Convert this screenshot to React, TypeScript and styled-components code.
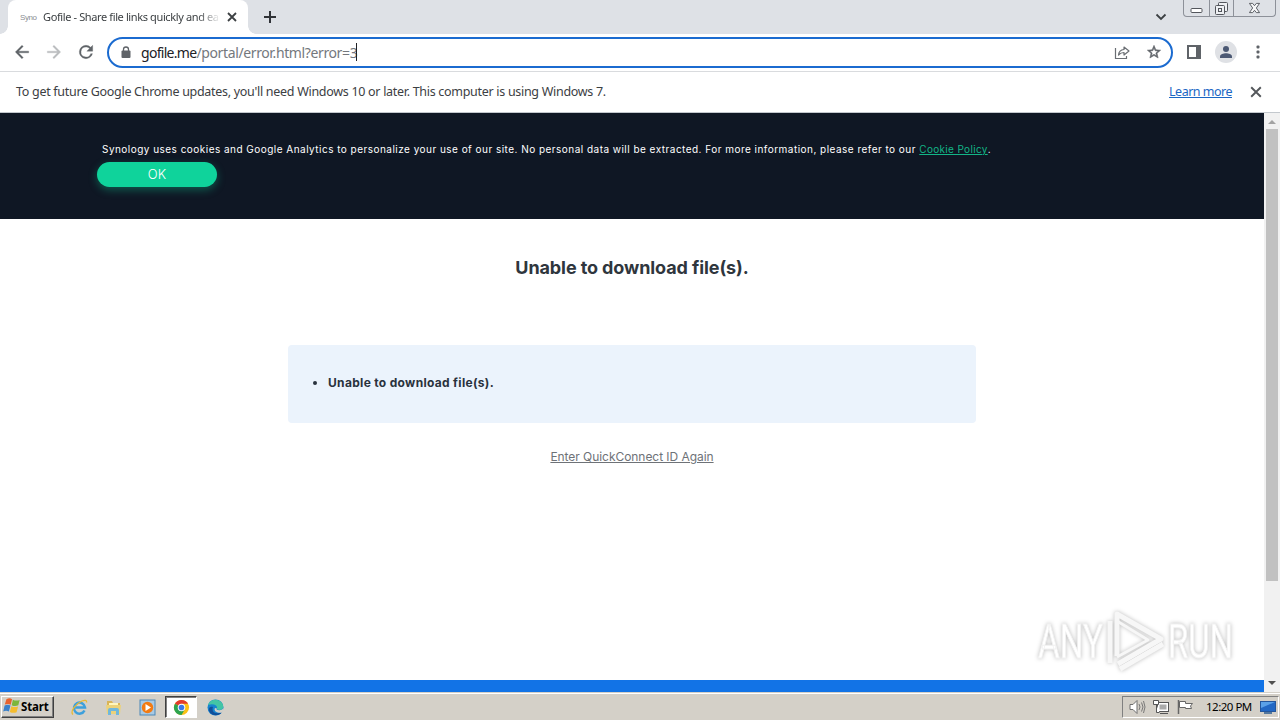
import React, { FC } from "react";
import styled, { createGlobalStyle } from "styled-components";

const GlobalStyle = createGlobalStyle`
  * {
    box-sizing: border-box;
  }
  body {
    margin: 0;
    overflow: hidden;
    background: #fff;
  }
`;

const tahoma = `"Noto Sans", "Open Sans", sans-serif`;

const Screen = styled.div`
  display: flex;
  flex-direction: column;
  width: 1280px;
  height: 720px;
  overflow: hidden;
  font-family: ${tahoma};
  svg {
    display: block;
    flex: none;
  }
`;

const Text = styled.span<{ $size: number; $spacing?: number; $color?: string }>`
  font-size: ${(p) => p.$size}px;
  letter-spacing: ${(p) => p.$spacing || 0}px;
  color: ${(p) => p.$color || "#3c4043"};
  white-space: nowrap;
`;

/* tab strip */
const TabStrip = styled.div`
  display: flex;
  height: 34px;
  flex: none;
  background: #dee1e6;
  padding-left: 8px;
`;

const Tab = styled.div`
  display: flex;
  align-items: center;
  position: relative;
  width: 240px;
  height: 34px;
  padding-left: 12px;
  background: #fff;
  border-radius: 8px 8px 0 0;
  &::before,
  &::after {
    content: "";
    position: absolute;
    bottom: 0;
    width: 8px;
    height: 8px;
  }
  &::before {
    left: -8px;
    background: radial-gradient(circle at 0 0, transparent 7.5px, #fff 8px);
  }
  &::after {
    right: -8px;
    background: radial-gradient(circle at 100% 0, transparent 7.5px, #fff 8px);
  }
`;

const Favicon = styled.span`
  width: 23px;
  font: 8px "Liberation Sans", sans-serif;
  letter-spacing: -0.4px;
  color: #8a8d91;
`;

const TabTitle = styled.div`
  display: flex;
  width: 176px;
  padding-bottom: 1px;
  overflow: hidden;
  mask-image: linear-gradient(90deg, #000 88%, transparent 101%);
`;

const TabClose = styled.div`
  margin-left: 8px;
`;

const NewTab = styled.div`
  padding: 10px 0 0 15px;
`;

const TabSearch = styled.div`
  margin-left: auto;
  padding: 12px 16px 0 0;
`;

const WindowButtons = styled.div`
  display: flex;
  width: 93px;
  height: 17px;
  margin-right: 4px;
  border: 1px solid #8d9199;
  border-top: 0;
  border-radius: 0 0 4px 4px;
`;

const WindowButton = styled.div<{ $width: number }>`
  display: flex;
  align-items: center;
  justify-content: center;
  width: ${(p) => p.$width}px;
  & + & {
    border-left: 1px solid #8d9199;
  }
`;

/* toolbar */
const Toolbar = styled.div`
  display: flex;
  align-items: center;
  height: 38px;
  flex: none;
  padding: 0 12px 1px 12px;
  background: #fff;
  border-bottom: 1px solid #d9dbde;
`;

const NavButton = styled.div`
  display: flex;
  width: 20px;
  justify-content: center;
  margin-right: 12px;
`;

const AddressBar = styled.div`
  display: flex;
  align-items: center;
  width: 1066px;
  height: 31px;
  margin-left: -1px;
  padding: 0 9px 0 12px;
  border: 2px solid #1b6bd0;
  border-radius: 16px;
`;

const Url = styled.div`
  display: flex;
  align-items: center;
  margin-left: 10px;
  flex: 1;
`;

const Caret = styled.i`
  width: 1px;
  height: 18px;
  margin-left: -1px;
  background: #202124;
`;

const Actions = styled.div`
  display: flex;
  align-items: center;
  gap: 14px;
  margin-left: 14px;
`;

const MenuDots = styled.svg`
  margin-left: 5px;
`;

const InfoBar = styled.div`
  display: flex;
  align-items: center;
  height: 41px;
  flex: none;
  padding: 0 18px 0 16px;
  border-bottom: 1px solid #c3c8cd;
  span,
  a {
    padding-bottom: 2px;
  }
`;

const LearnMore = styled.a`
  margin-left: auto;
  margin-right: 18px;
  font-size: 12.5px;
  letter-spacing: -0.5px;
  color: #1a66c4;
  text-decoration: underline;
`;

/* page */
const Viewport = styled.div`
  display: flex;
  height: 579px;
  flex: none;
`;

const Page = styled.main`
  display: flex;
  flex-direction: column;
  position: relative;
  width: 1264px;
  font-family: Inter, sans-serif;
`;

const CookieBar = styled.div`
  height: 106px;
  flex: none;
  padding: 29px 97px 0;
  background: #0f1724;
`;

const CookieText = styled.p`
  margin: 0 0 0 5px;
  font-size: 10px;
  line-height: 15px;
  letter-spacing: 0.473px;
  white-space: nowrap;
  color: #fff;
  a {
    letter-spacing: 0.33px;
    color: #12b587;
    text-decoration: underline;
  }
`;

const OkButton = styled.button`
  display: block;
  width: 120px;
  height: 25px;
  margin-top: 5px;
  padding: 0 0 1px;
  border: 0;
  border-radius: 13px;
  background: #0fd39b;
  box-shadow: 0 3px 8px rgba(15, 211, 155, 0.35);
  font: 300 13px Inter, sans-serif;
  color: #fff;
`;

const Title = styled.h1`
  margin: 37px 0 0;
  font-size: 18px;
  line-height: 24px;
  font-weight: 700;
  letter-spacing: -0.1px;
  text-align: center;
  color: #2f363d;
`;

const ErrorBox = styled.ul`
  display: flex;
  align-items: center;
  width: 688px;
  height: 78px;
  margin: 65px auto 0;
  padding: 0 0 4px 40px;
  border-radius: 4px;
  background: #ebf3fc;
  li {
    font-size: 12px;
    font-weight: 700;
    letter-spacing: 0.32px;
    color: #29323d;
    list-style: none;
    position: relative;
  }
  li::before {
    content: "";
    position: absolute;
    left: -15px;
    top: 6px;
    width: 4px;
    height: 4px;
    border-radius: 50%;
    background: #29323d;
  }
`;

const RetryLink = styled.a`
  align-self: center;
  margin-top: 26px;
  font-size: 12px;
  line-height: 16px;
  letter-spacing: -0.05px;
  text-decoration: underline;
  color: #6e7277;
`;

const FooterStrip = styled.div`
  height: 12px;
  margin-top: auto;
  background: #1273e6;
`;

const Watermark = styled.div`
  position: absolute;
  left: 1028px;
  top: 489px;
`;

const Scrollbar = styled.div`
  display: flex;
  flex-direction: column;
  justify-content: space-between;
  align-items: center;
  width: 16px;
  background: #f1f1f1;
  padding: 7px 0 7px;
`;

const ScrollThumb = styled.div`
  width: 12px;
  height: 452px;
  margin: 5px 0 auto;
  background: #c1c1c1;
`;

/* taskbar */
const Taskbar = styled.div`
  display: flex;
  align-items: center;
  height: 28px;
  flex: none;
  padding: 1px 0 0 1px;
  background: #d4d0c8;
  border-top: 1px solid #d4d0c8;
  box-shadow: inset 0 1px #fff;
`;

const StartButton = styled.div`
  display: flex;
  align-items: center;
  gap: 1px;
  width: 53px;
  height: 22px;
  padding: 0 0 1px 1px;
  border: 1px solid;
  border-color: #fff #404040 #404040 #fff;
  box-shadow: inset -1px -1px #808080;
  font: bold 11.5px ${tahoma};
  letter-spacing: -0.15px;
  color: #000;
`;

const QuickLaunch = styled.div`
  display: flex;
  align-items: center;
  margin-left: 8px;
`;

const TaskItem = styled.div<{ $active?: boolean }>`
  display: flex;
  align-items: center;
  justify-content: center;
  width: ${(p) => (p.$active ? 32 : 34)}px;
  height: 22px;
  margin: 0 ${(p) => (p.$active ? 1 : 0)}px;
  border: 1px solid transparent;
  ${(p) =>
    p.$active &&
    `
    background: #fff;
    border-color: #404040 #fff #fff #404040;
    box-shadow: inset 1px 1px #808080;
  `}
`;

const Tray = styled.div`
  display: flex;
  align-items: center;
  width: 157px;
  height: 22px;
  margin-left: auto;
  margin-right: 1px;
  padding-left: 6px;
  border: 1px solid;
  border-color: #808080 #fff #fff #808080;
`;

const TrayIcon = styled.div`
  width: 24px;
`;

const Clock = styled.span`
  width: 54px;
  margin-left: 5px;
  padding-bottom: 1px;
  font: 11.5px ${tahoma};
  letter-spacing: -0.5px;
  white-space: nowrap;
  color: #000;
`;

const Cross: FC<{ size: number; color: string; width?: number }> = ({ size, color, width = 1.8 }) => (
  <svg width={size} height={size} viewBox="0 0 10 10" stroke={color} strokeWidth={width}>
    <path d="M1 1l8 8M9 1l-8 8" />
  </svg>
);

const MaterialIcon: FC<{ d: string; color?: string; size?: number }> = ({ d, color = "#5f6368", size = 20 }) => (
  <svg width={size} height={size} viewBox="0 0 24 24" fill={color} stroke={color} strokeWidth=".4">
    <path d={d} />
  </svg>
);

const StarIcon = styled.svg`
  margin-left: 16px;
`;

const TabBar = () => (
  <TabStrip>
    <Tab>
      <Favicon>Syno</Favicon>
      <TabTitle>
        <Text $size={11} $spacing={-0.38}>Gofile - Share file links quickly and easily</Text>
      </TabTitle>
      <TabClose>
        <Cross size={10} color="#3c4043" />
      </TabClose>
    </Tab>
    <NewTab>
      <svg width="14" height="14" stroke="#303338" strokeWidth="2">
        <path d="M7 1v12M1 7h12" />
      </svg>
    </NewTab>
    <TabSearch>
      <svg width="12" height="10" fill="none" stroke="#3c4043" strokeWidth="1.8">
        <path d="M1.5 2.5l4.5 4.5 4.5-4.5" />
      </svg>
    </TabSearch>
    <WindowButtons>
      <WindowButton $width={25}>
        <svg width="13" height="17" fill="#fff" stroke="#53565c">
          <rect x="1" y="8.5" width="11" height="4" rx="1" />
        </svg>
      </WindowButton>
      <WindowButton $width={25}>
        <svg width="13" height="15" fill="#eef0f3" stroke="#53565c">
          <rect x="3.5" y="1.5" width="9" height="9" rx="1" />
          <rect x="0.5" y="4.5" width="9" height="9" rx="1" />
          <rect x="3.5" y="7.5" width="3" height="3" />
        </svg>
      </WindowButton>
      <WindowButton $width={42}>
        <svg width="13" height="12" viewBox="0 0 13 13" fill="#f6f7f8" stroke="#53565c">
          <path d="M1 1.5h3.5l2 2.5 2-2.5H12L8.5 6.5l3.5 5H8.5l-2-2.5-2 2.5H1l3.5-5z" />
        </svg>
      </WindowButton>
    </WindowButtons>
  </TabStrip>
);

const NavBar = () => (
  <Toolbar>
    <NavButton>
      <MaterialIcon d="M20 11H7.83l5.59-5.59L12 4l-8 8 8 8 1.41-1.41L7.83 13H20v-2z" />
    </NavButton>
    <NavButton>
      <MaterialIcon color="#babcbe" d="M12 4l-1.41 1.41L16.17 11H4v2h12.17l-5.58 5.59L12 20l8-8z" />
    </NavButton>
    <NavButton>
      <MaterialIcon d="M17.65 6.35A7.96 7.96 0 0 0 12 4a8 8 0 1 0 7.73 10h-2.08A6 6 0 1 1 12 6c1.66 0 3.14.69 4.22 1.78L13 11h7V4l-2.35 2.35z" />
    </NavButton>
    <AddressBar>
      <svg width="10" height="13">
        <path d="M2.5 6V3.5a2.5 2.5 0 0 1 5 0V6" fill="none" stroke="#5f6368" strokeWidth="1.3" />
        <rect x="0.5" y="4.5" width="9" height="7.5" rx="1" fill="#5f6368" />
      </svg>
      <Url>
        <Text $size={14} $spacing={-0.7} $color="#202124">gofile.me</Text>
        <Text $size={14} $spacing={-0.38} $color="#74787d">/portal/error.html?error=3</Text>
        <Caret />
      </Url>
      <svg width="16" height="16" fill="none" stroke="#6a6e73" strokeWidth="1.2">
        <path d="M1.5 4v10.5h11V12" />
        <path d="M4.5 11c.3-3.5 2.2-5.3 5.5-5.5V3l5 4-5 4V8.5C7.5 8.500 6 9.300 4.500 11z" strokeLinejoin="round" />
      </svg>
      <StarIcon width="16" height="16" viewBox="0 0 24 24" fill="#5f6368">
        <path
          d="M22 9.240l-7.190-.62L12 2 9.190 8.630 2 9.240l5.460 4.730L5.820 21 12 17.270 18.180 21l-1.630-7.030L22 9.240zM12 15.400l-3.760 2.270 1-4.280-3.320-2.880 4.380-.38L12 6.100l1.710 4.040 4.380.38-3.320 2.880 1 4.280L12 15.400z"
          stroke="#5f6368"
          strokeWidth=".8"
        />
      </StarIcon>
    </AddressBar>
    <Actions>
      <svg width="14" height="14">
        <rect x="1" y="1" width="12" height="12" fill="#fff" stroke="#5f6368" strokeWidth="2" />
        <rect x="9" y="1" width="4" height="12" fill="#5f6368" />
      </svg>
      <svg width="22" height="22">
        <circle cx="11" cy="11" r="11" fill="#dfe1e5" />
        <circle cx="11" cy="8" r="3" fill="#4b5873" />
        <path d="M5 17v-1.5c0-2 3.5-3.2 6-3.2s6 1.2 6 3.2V17z" fill="#4b5873" />
      </svg>
      <MenuDots width="4" height="14" fill="#5f6368">
        <rect x="0.5" y="0.5" width="3" height="3" rx="1" />
        <rect x="0.5" y="5.5" width="3" height="3" rx="1" />
        <rect x="0.5" y="10.5" width="3" height="3" rx="1" />
      </MenuDots>
    </Actions>
  </Toolbar>
);

const WatermarkArt = styled.svg`
  overflow: visible;
  filter: drop-shadow(0 0 2px #bbb);
`;

const AnyRun = () => (
  <Watermark>
    <WatermarkArt width="220" height="80">
      <g fontFamily="Roboto, sans-serif" fontSize="49" fill="#fff" stroke="#f2f2f2" strokeWidth="1">
        <text x="10" y="56" textLength="65" lengthAdjust="spacingAndGlyphs">ANY</text>
        <text x="140" y="56" textLength="65" lengthAdjust="spacingAndGlyphs">RUN</text>
      </g>
      <g fill="none" stroke="#f7f7f7" strokeWidth="5" strokeLinejoin="round">
        <path d="M89 54V12l44 25-43 25" />
        <path d="M82 19v42" />
        <path d="M89 19l31 19-31 17" strokeWidth="3" />
        <path d="M92 67l43-25" />
      </g>
    </WatermarkArt>
  </Watermark>
);

const StartLogo = () => (
  <svg width="17" height="17" viewBox="0 1 15 15">
    <path d="M3 2q3-1.5 5 0L6.8 7q-2.3-1.5-5.2-.2z" fill="#e8622d" />
    <path d="M8.7 2.5q3 1.5 6 .2L13.5 7.5q-3 1.3-5.8-.2z" fill="#7db63b" />
    <path d="M1.4 7.7q3-1.5 5.2 0L5.2 13q-2.5-1.5-5 0z" fill="#3a80c9" />
    <path d="M7.4 8.2q3 1.5 5.9.2L12 13.5q-3 1.3-6-.2z" fill="#f5bd2f" />
  </svg>
);

const TaskbarIcons = () => (
  <QuickLaunch>
    <TaskItem>
      <svg width="17" height="17" fill="none">
        <path d="M13.5 11.5A5.5 5.5 0 1 1 14 8.5H4.5" stroke="#3da0dc" strokeWidth="2.5" />
        <path d="M2 15.5C-1 13 4 5 11 2c3-1.2 5-.8 4.5 1.5" stroke="#e9b932" strokeWidth="1.3" />
      </svg>
    </TaskItem>
    <TaskItem>
      <svg width="17" height="17">
        <path d="M2 2h5l1 2h7v11H2z" fill="#d9b458" />
        <path d="M4 4h9v5H4z" fill="#fff6bd" />
        <path d="M1 6h15l-1 9H2z" fill="#ecd27a" />
        <path d="M3 16v-5q0-2 2-2h7q2 0 2 2v5h-3v-4H6v4z" fill="#70b7dc" />
      </svg>
    </TaskItem>
    <TaskItem>
      <svg width="17" height="17">
        <rect x="1" y="1" width="15" height="15" fill="#a9cae4" stroke="#4c88b7" />
        <circle cx="8.5" cy="8.5" r="5.7" fill="#f27b13" />
        <path d="M6.5 5l5.5 3.5L6.5 12z" fill="#fff" />
      </svg>
    </TaskItem>
    <TaskItem $active>
      <svg width="17" height="17" viewBox="0 0 18 18">
        <circle cx="9" cy="9" r="8" fill="#fbc116" />
        <path d="M9 9L2.07 5A8 8 0 0 1 15.93 5H9z" fill="#e33b2e" />
        <path d="M9 9l-6.93-4A8 8 0 0 0 9 17l3.46-6z" fill="#2da44f" />
        <circle cx="9" cy="9" r="4" fill="#fff" />
        <circle cx="9" cy="9" r="3" fill="#3b78e7" />
      </svg>
    </TaskItem>
    <TaskItem>
      <svg width="17" height="17">
        <circle cx="8.5" cy="8.5" r="8" fill="#1683cf" />
        <path d="M1 6C3 0 11-1 15 4c2.5 3.5 1 7-2.5 7-2 0-3-.8-2.5-2 .5-3-4-5-9-3z" fill="#43c5a5" />
        <path d="M6 8c-2 5 3 8 9 5-3 5-11 4-13-1-.8-3 1-5 4-4z" fill="#124f9a" />
        <path d="M9.5 9c-.5 1.5 1 2.3 3 2.2 1.5 0 3-.8 3.8-2v3l-1.5 1.5c-5 .5-8-1.5-7-4.5z" fill="#d4d0c8" />
      </svg>
    </TaskItem>
  </QuickLaunch>
);

const App: FC = () => {
  return (
    <Screen>
      <GlobalStyle />
      <TabBar />
      <NavBar />
      <InfoBar>
        <Text $size={12.5} $spacing={-0.295}>
          To get future Google Chrome updates, you'll need Windows 10 or later. This computer is using Windows 7.
        </Text>
        <LearnMore>Learn more</LearnMore>
        <Cross size={12} color="#54575b" width={1.6} />
      </InfoBar>
      <Viewport>
        <Page>
          <CookieBar>
            <CookieText>
              Synology uses cookies and Google Analytics to personalize your use of our site. No personal data will be
              extracted. For more information, please refer to our <a>Cookie Policy</a>.
            </CookieText>
            <OkButton>OK</OkButton>
          </CookieBar>
          <Title>Unable to download file(s).</Title>
          <ErrorBox>
            <li>Unable to download file(s).</li>
          </ErrorBox>
          <RetryLink>Enter QuickConnect ID Again</RetryLink>
          <FooterStrip />
          <AnyRun />
        </Page>
        <Scrollbar>
          <svg width="8" height="4" fill="#a3a3a3">
            <path d="M0 4l4-4 4 4z" />
          </svg>
          <ScrollThumb />
          <svg width="8" height="4" fill="#505050">
            <path d="M0 0l4 4 4-4z" />
          </svg>
        </Scrollbar>
      </Viewport>
      <Taskbar>
        <StartButton>
          <StartLogo />
          Start
        </StartButton>
        <TaskbarIcons />
        <Tray>
          <TrayIcon>
            <svg width="17" height="16" fill="#fff" stroke="#6e6e6e">
              <path d="M1 5.5h3l4-4v13l-4-4H1z" />
              <path d="M10 5q2 3 0 6M12.5 3.5q3 4.5 0 9M14.5 2q3 6 0 12" fill="none" strokeWidth=".9" />
            </svg>
          </TrayIcon>
          <TrayIcon>
            <svg width="17" height="16" fill="#fff" stroke="#555">
              <rect x="4.5" y="3.5" width="11" height="9" />
              <rect x="6.5" y="5.5" width="7" height="5" fill="#aaa" stroke="none" />
              <path d="M.5 1.5h5v4h-5zM3.5 5.5v8h3M7 14.5h8" />
            </svg>
          </TrayIcon>
          <TrayIcon>
            <svg width="17" height="16" fill="#fff" stroke="#666">
              <path d="M2.5 2.5h6v2h7l-2 2.5 1 2.5h-6v-1h-6z" />
              <path d="M1.5 1v14" strokeWidth="1.5" />
            </svg>
          </TrayIcon>
          <Clock>12:20 PM</Clock>
          <svg width="16" height="16">
            <rect x="0.5" y="2.5" width="15" height="10" fill="#2268c4" stroke="#24569b" />
            <path d="M1 3h14L1 9z" fill="#5aa1e8" />
            <rect x="4" y="13" width="8" height="2" fill="#53779e" />
          </svg>
        </Tray>
      </Taskbar>
    </Screen>
  );
};

export default App;
